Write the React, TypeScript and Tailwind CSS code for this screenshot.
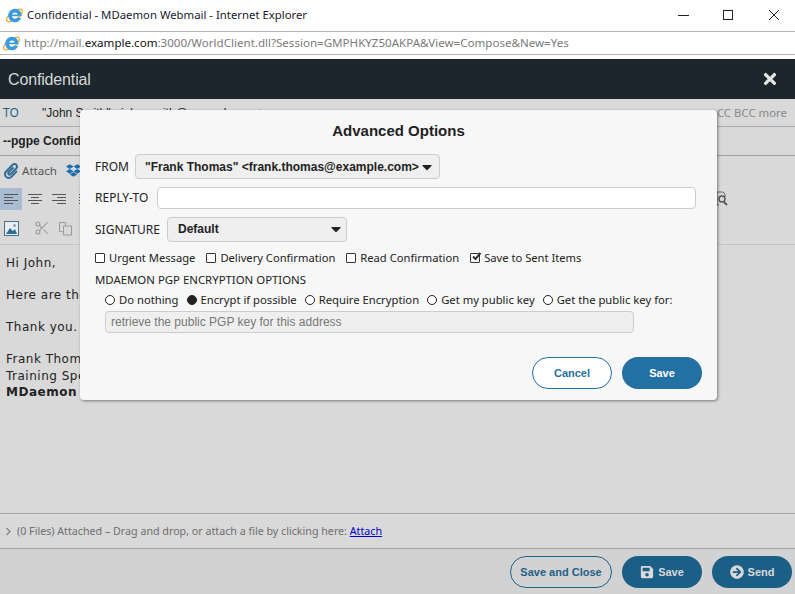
import React from "react";
import { FaSave, FaArrowCircleRight, FaPaperclip, FaDropbox, FaTimes, FaChevronRight, FaCaretDown } from "react-icons/fa";
import { Scissors } from "lucide-react";

const IE = ({ size = 17 }: { size?: number }) => (
  <svg width={size} height={size} viewBox="0 0 24 24" className="shrink-0">
    <ellipse cx="12" cy="12" rx="13" ry="5.5" transform="rotate(-35 12 12)" fill="none" stroke="#eeb63c" strokeWidth="2" />
    <path d="M12.5 2.5a9.5 9.5 0 1 0 9 12.6h-5.4a4.4 4.4 0 0 1-7.6-1.9H22a9.5 9.5 0 0 0-9.5-10.7zm-4 8.2a4.3 4.3 0 0 1 8.2 0z" fill="#3a9be0" />
  </svg>
);

const Align = ({ kind }: { kind: "l" | "c" | "r" | "j" }) => {
  const lines: [number, number][] =
    kind === "l" ? [[1, 15], [1, 10], [1, 15], [1, 10]] :
    kind === "c" ? [[1, 15], [4, 12], [1, 15], [4, 12]] :
    kind === "r" ? [[1, 15], [6, 15], [1, 15], [6, 15]] :
    [[1, 15], [1, 15], [1, 15], [1, 15]];
  return (
    <svg width="16" height="12" viewBox="0 0 16 12" className="shrink-0">
      {lines.map((l, i) => (
        <line key={i} x1={l[0]} x2={l[1]} y1={1.5 + i * 3} y2={1.5 + i * 3} stroke="#555" strokeWidth="1" />
      ))}
    </svg>
  );
};

const Check = ({ label, checked }: { label: string; checked?: boolean }) => (
  <span className="flex items-center gap-[4px] whitespace-nowrap">
    <span className="relative h-[10px] w-[10px] rounded-[1px] border border-[#333] bg-white">
      {checked && (
        <svg width="12" height="10" viewBox="0 0 12 10" className="absolute left-[0px] top-[-2px]">
          <path d="M2 4.5l2.5 2.5L9.5 1" fill="none" stroke="#333" strokeWidth="2" />
        </svg>
      )}
    </span>
    <span>{label}</span>
  </span>
);

const Radio = ({ label, on }: { label: string; on?: boolean }) => (
  <span className="flex items-center gap-[4px] whitespace-nowrap">
    <span className={`h-[10px] w-[10px] rounded-full border-[1.5px] border-[#222] ${on ? "bg-[#222]" : "bg-white"}`} />
    <span>{label}</span>
  </span>
);

const ui = "font-['Noto_Sans','DejaVu_Sans',sans-serif]";
const arial = "font-['Liberation_Sans',Arial,sans-serif]";

export default function App() {
  return (
    <div className={`relative flex h-[594px] w-[795px] flex-col overflow-hidden bg-white ${ui}`}>
      {/* window title */}
      <div className="flex h-[31px] shrink-0 items-center pb-[1px] pl-[6px] text-[11.35px] text-[#1a1a2e]">
        <IE size={17} />
        <span className="ml-[4px] flex-1">Confidential - MDaemon Webmail - Internet Explorer</span>
        <svg width="102" height="14" viewBox="0 0 102 14" className="mr-[15px]">
          <line x1="0" x2="11" y1="7.5" y2="7.5" stroke="#222" />
          <rect x="45.5" y="2.5" width="9" height="9" fill="none" stroke="#222" />
          <path d="M91 2l10 10M101 2L91 12" stroke="#222" fill="none" />
        </svg>
      </div>
      {/* url bar */}
      <div className="flex h-[24px] shrink-0 items-center border-y border-[#b5b5b5] pl-[3px] text-[11.57px] text-[#7a7a7a]">
        <IE size={17} />
        <span className="ml-[4px]">
          http://mail.<span className="text-[#111]">example.com</span>:3000/WorldClient.dll?Session=GMPHKYZ50AKPA&amp;View=Compose&amp;New=Yes
        </span>
      </div>
      <div className="h-[4px] shrink-0" />
      {/* header */}
      <div className="flex h-[40px] shrink-0 items-center justify-between bg-[#1b262d] pl-[8px] pr-[16px] text-[#d8d8d8]">
        <span className={`pt-[1px] text-[16px] tracking-[-0.15px] ${arial}`}>Confidential</span>
        <FaTimes className="text-[18px] text-[#e6e6e6]" />
      </div>
      {/* TO */}
      <div className="flex h-[28px] shrink-0 items-center justify-between border-b border-[#aaa] bg-[#d9d9d9] pl-[3px] pr-[8px] text-[12px]">
        <span className="flex items-center">
          <span className="w-[39px] text-[#1d5f86]">TO</span>
          <span className={`text-[#222] ${arial}`}>"John Smith" &lt;john.smith@example.com&gt;</span>
        </span>
        <span className="text-[11.4px] text-[#888]">CC BCC more</span>
      </div>
      {/* subject */}
      <div className={`flex h-[29px] shrink-0 items-center border-b border-[#a0a0a0] bg-[#d9d9d9] pl-[3px] text-[12px] font-bold text-[#222] ${arial}`}>
        --pgpe Confidential
      </div>
      {/* attach */}
      <div className="flex h-[29px] shrink-0 items-center bg-[#d9d9d9] pl-[3px] text-[11.6px] text-[#555]">
        <FaPaperclip className="text-[16px] text-[#2f6d96]" />
        <span className="ml-[3px]">Attach</span>
        <FaDropbox className="ml-[9px] text-[15px] text-[#1a6fb0]" />
      </div>
      {/* toolbar 1 */}
      <div className="flex h-[27px] shrink-0 items-center bg-[#d9d9d9] text-[12px]">
        <span className="flex h-[22px] w-[22px] items-center justify-center bg-[#a9bcd3]"><Align kind="l" /></span>
        <span className="ml-[5px] flex w-[48px] gap-[8px]"><Align kind="c" /><Align kind="r" /></span>
        <span className="ml-[3px] w-[6px] overflow-hidden"><Align kind="j" /></span>
        <span className="flex-1" />
        <svg width="14" height="16" viewBox="0 0 14 16" className="mr-[67px]">
          <path d="M3 1h6l2 2v3M3 1v13h2" fill="none" stroke="#666" />
          <circle cx="8" cy="8" r="3" fill="none" stroke="#555" strokeWidth="1.4" />
          <path d="M10 11l3 3" stroke="#555" strokeWidth="1.8" />
        </svg>
      </div>
      {/* toolbar 2 */}
      <div className="flex h-[33px] shrink-0 items-center border-b border-[#c4c4c4] bg-[#d9d9d9] pl-[4px] text-[#8b8b8b]">
        <svg width="15" height="15" viewBox="0 0 15 15">
          <rect x="0.5" y="0.5" width="14" height="14" fill="#e8eef3" stroke="#4a6f8c" />
          <circle cx="10.5" cy="4.5" r="1.5" fill="#8a9fb0" />
          <path d="M2 13l4-6 3 3 2-2 2 5z" fill="#2f6d96" />
        </svg>
        <Scissors size={16} strokeWidth={1.6} className="ml-[15px] text-[#999]" />
        <svg width="15" height="15" viewBox="0 0 15 15" className="ml-[8px]">
          <path d="M1.5 1.5h6v3M1.5 1.5v9h3M5.5 5h8v9h-8z" fill="none" stroke="#999" />
        </svg>
      </div>
      {/* body */}
      <div className="flex-1 bg-[#d9d9d9] pl-[6px] pt-[10px] text-[12px] leading-[16px] tracking-[0.5px] text-[#222] font-['DejaVu_Sans',sans-serif]">
        <p>Hi John,</p>
        <p className="mt-[16px]">Here are the files.</p>
        <p className="mt-[16px]">Thank you.</p>
        <p className="mt-[16px]">Frank Thomas</p>
        <p className="mt-[1px]">Training Specialist</p>
        <p className="font-bold">MDaemon Technologies</p>
      </div>
      {/* attachments */}
      <div className="flex h-[36px] shrink-0 items-center border-y border-[#9fa3a6] bg-[#d9d9d9] pl-[4px] text-[10.7px] text-[#6e6e6e]">
        <FaChevronRight className="text-[9px] text-[#888]" />
        <span className="ml-[4px] pt-[1px]">(0 Files) Attached – Drag and drop, or attach a file by clicking here: <a className="text-[#0000cc] underline">Attach</a></span>
      </div>
      {/* footer */}
      <div className={`flex h-[45px] shrink-0 items-center justify-end gap-[10px] bg-[#d2d2d2] pr-[3px] pt-[1px] text-[11px] font-bold ${arial}`}>
        <button className="h-[32px] w-[102px] rounded-full border border-[#1f6089] bg-transparent text-[#1f6089]">Save and Close</button>
        <button className="flex h-[32px] w-[80px] items-center justify-center gap-[4px] rounded-full bg-[#1c5f86] text-[#d9d9d9]"><FaSave className="text-[14px]" />Save</button>
        <button className="flex h-[32px] w-[80px] items-center justify-center gap-[4px] rounded-full bg-[#1c5f86] text-[#d9d9d9]"><FaArrowCircleRight className="text-[14px]" />Send</button>
      </div>

      {/* modal */}
      <div className="absolute left-[80px] top-[110px] flex h-[290px] w-[637px] flex-col rounded-[4px] bg-[#f7f7f7] pl-[15px] pr-[15px] text-[12px] text-[#222] shadow-[1px_1px_3px_rgba(0,0,0,0.45)]">
        <h2 className={`mt-[12px] text-center text-[15px] leading-[18px] font-bold text-[#222] ${arial}`}>Advanced Options</h2>
        <div className="mt-[14px] flex h-[25px] items-center">
          <span className="w-[40px]">FROM</span>
          <div className={`flex h-[25px] w-[305px] items-center justify-between rounded-[4px] border border-[#ccc] bg-[#efefef] pl-[9px] pr-[4px] font-bold ${arial}`}>
            <span>"Frank Thomas" &lt;frank.thomas@example.com&gt;</span>
            <FaCaretDown className="text-[16px]" />
          </div>
        </div>
        <div className="mt-[8px] flex h-[22px] items-center">
          <span className="w-[62px]">REPLY-TO</span>
          <div className="h-[22px] w-[539px] rounded-[4px] border border-[#ccc] bg-white" />
        </div>
        <div className="mt-[8px] flex h-[25px] items-center">
          <span className="w-[72px]">SIGNATURE</span>
          <div className={`flex h-[25px] w-[180px] items-center justify-between rounded-[4px] border border-[#ccc] bg-[#efefef] pb-[1px] pl-[10px] pr-[2px] font-bold ${arial}`}>
            <span>Default</span>
            <FaCaretDown className="text-[16px]" />
          </div>
        </div>
        <div className="mt-[8px] flex h-[16px] items-center gap-[11px] text-[11.2px]">
          <Check label="Urgent Message" />
          <Check label="Delivery Confirmation" />
          <Check label="Read Confirmation" />
          <Check label="Save to Sent Items" checked />
        </div>
        <div className="mt-[6px] h-[16px] text-[11.4px] leading-[16px]">MDAEMON PGP ENCRYPTION OPTIONS</div>
        <div className="ml-[10px] mt-[4px] flex h-[16px] items-center gap-[8px] text-[11.25px]">
          <Radio label="Do nothing" />
          <Radio label="Encrypt if possible" on />
          <Radio label="Require Encryption" />
          <Radio label="Get my public key" />
          <Radio label="Get the public key for:" />
        </div>
        <div className={`ml-[10px] mt-[3px] flex h-[22px] w-[529px] items-center rounded-[4px] border border-[#ccc] bg-[#efefef] pl-[5px] text-[#777] ${arial}`}>
          retrieve the public PGP key for this address
        </div>
        <div className={`mt-[24px] flex justify-end gap-[10px] text-[11px] font-bold ${arial}`}>
          <button className="h-[32px] w-[80px] rounded-full border border-[#2371a3] bg-white text-[#2371a3]">Cancel</button>
          <button className="h-[32px] w-[80px] rounded-full bg-[#2371a3] text-white">Save</button>
        </div>
      </div>
    </div>
  );
}
